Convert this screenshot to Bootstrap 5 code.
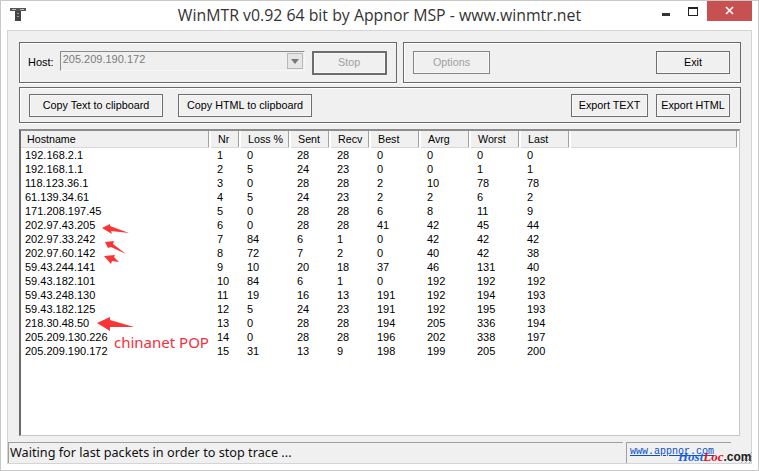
<!DOCTYPE html>
<html><head><meta charset="utf-8">
<link href="https://cdn.jsdelivr.net/npm/bootstrap@5.3.0/dist/css/bootstrap.min.css" rel="stylesheet">
<style>
html,body{margin:0;width:759px;height:471px;overflow:hidden;background:#fff}
.win{width:759px;height:471px;border:1px solid #c8c8c8;background:#fff;font-family:"Liberation Sans",sans-serif;font-size:11px;color:#000;position:relative}
.tbar{height:29px;position:relative}
.ttl{font-family:"Open Sans",sans-serif;font-size:15.85px;color:#333;line-height:29px;text-align:center}
.ticon{position:absolute;left:9px;top:7px}
.wbtns{position:absolute;right:6px;top:0}
.wmin{width:8px;height:3px;background:#333;margin-top:12px;margin-right:18px}
.wmax{width:10px;height:9px;border:1px solid #222;border-top-width:2px;margin-top:6px;margin-right:9px}
.wcl{width:45px;height:20px;background:#c75050}
.wcl svg{display:block;margin:5px auto 0}
.client{position:absolute;left:6px;top:29px;width:745px;height:434px;background:#f0f0f0;border:1px solid #d4d4d4;padding:11px 10px 0 11px}
.grp{border:1px solid #696969;box-shadow:0 1px 0 #fff,inset 1px 1px 0 #fff;background:#f0f0f0}
.g1{width:378px;height:41px;padding:8px 9px}
.g2{width:338px;height:41px;padding:8px 10px 0 9px}
.g3{height:36px;margin-top:4px;margin-bottom:6px;padding:6px 10px 6px 9px}
.wb{background:#f0f0f0;border:1px solid #6e6e6e;height:23px;line-height:18px;text-align:center;color:#000;font-size:10.8px;padding:0 0 2px;box-shadow:inset 0 0 0 1px #f8f8f8}
.dis{color:#a0a0a0;border-color:#858585}
.stopb{width:75px;height:24px;border:2px solid #6d6d6d;margin-left:7px}
.combo{width:245px;height:20px;border:1px solid;border-color:#8a8a8a #f8f8f8 #f8f8f8 #8a8a8a;background:#efefef;color:#7c7c7c;line-height:15px;padding-left:2px;margin-left:6px;position:relative;font-size:11px}
.carr{position:absolute;right:1px;top:1px;width:16px;height:16px;background:#e6e6e6;border:1px solid #b8b8b8}
.carr::after{content:"";position:absolute;left:3px;top:5px;border:4px solid transparent;border-top:5px solid #777;border-bottom:0}
.hostl{padding-top:3px;margin-left:-1px}
.w-opt{width:77px}.w-exit{width:74px}.w-copy{width:134px}.w-etx{width:77px}
.gap-l{margin-left:8px}.gap-c{margin-left:15px}
.lst{height:307px;background:#fff;border:1px solid #c8c8c8;border-top:2px solid #8c8c8c;border-left:2px solid #6a6a6a;overflow:hidden;width:721px}
.grid{table-layout:fixed;border-collapse:collapse;width:718px}
.grid col{width:50px}
.grid col.c-h{width:189px}.grid col.c-n{width:30px}.grid col.c-s{width:40px}.grid col.c-r{width:auto}
.grid th{font-weight:400;font-size:10.7px;height:16px;padding:1px 0 0 7px;background:#f0f0f0;border-right:2px solid #fff;box-shadow:inset -1px 0 0 #a0a0a0;border-bottom:1px solid #d8d8d8;white-space:nowrap;line-height:14px}
.grid td{height:14px;padding:0 0 0 7px;line-height:14px;white-space:nowrap}
.grid th:first-child{padding-left:6px}
.grid td:first-child{padding-left:4px}
.sbar{position:absolute;left:0;top:411px;height:21px;width:742px}
.s1{width:615px;height:21px;border-top:1px solid #a0a0a0;border-left:1px solid #a0a0a0;font-size:12.7px;padding-left:1px;line-height:19px;font-family:"Noto Sans",sans-serif;color:#111;background:#f0f0f0;white-space:nowrap}
.s2{width:105px;height:21px;margin-left:3px;border-top:1px solid #a0a0a0;border-left:1px solid #a0a0a0;padding-left:3px;font-family:"Liberation Mono",monospace;font-size:10px;line-height:17px;color:#0a4fc4;text-decoration:underline}
.grip{position:absolute;right:6px;bottom:7px}
.wm{position:absolute;left:677px;top:449px;font-family:"Liberation Serif",serif;font-weight:700;font-style:italic;font-size:13px;line-height:14px;white-space:nowrap}
.wm .h{color:#1464e8}.wm .l{color:#e0142c}.wm .c{color:#222;font-family:"Liberation Sans",sans-serif;font-style:normal;font-size:12px}
.over{position:absolute;left:-1px;top:-1px;pointer-events:none}
.note{position:absolute;left:113px;top:331px;color:#f42f3c;font-family:"Noto Sans",sans-serif;font-size:15px;line-height:20px}
</style></head><body>
<div class="win">
 <div class="tbar">
  <svg class="ticon" width="18" height="14" viewBox="0 0 18 14"><path d="M0 0h16v3h-16z" fill="#555"/><path d="M5 3h6v10h-6z" fill="#444"/><path d="M2 1h4v1h-4zM10 1h4v1h-4z" fill="#bbb"/><path d="M7 5h2v1h-2zM7 8h2v1h-2z" fill="#999"/></svg>
  <div class="ttl">WinMTR v0.92 64 bit by Appnor MSP - www.winmtr.net</div>
  <div class="wbtns d-flex align-items-start"><div class="wmin"></div><div class="wmax"></div><div class="wcl"><svg width="9" height="9" viewBox="0 0 9 9"><path d="M1 1l7 7M8 1l-7 7" stroke="#fff" stroke-width="1.6"/></svg></div></div>
 </div>
 <div class="client">
  <div class="d-flex justify-content-between">
   <div class="grp g1 d-flex align-items-start"><span class="hostl">Host:</span><div class="combo">205.209.190.172<span class="carr"></span></div><button class="wb dis stopb">Stop</button></div>
   <div class="grp g2 d-flex justify-content-between align-items-start"><button class="wb dis w-opt">Options</button><button class="wb w-exit">Exit</button></div>
  </div>
  <div class="grp g3 d-flex"><button class="wb w-copy">Copy Text to clipboard</button><button class="wb w-copy gap-c">Copy HTML to clipboard</button><button class="wb ms-auto w-etx">Export TEXT</button><button class="wb w-exit gap-l">Export HTML</button></div>
  <div class="lst"><table class="grid"><colgroup><col class="c-h"><col class="c-n"><col><col class="c-s"><col class="c-s"><col><col><col><col><col class="c-r"></colgroup>
  <thead><tr><th>Hostname</th><th>Nr</th><th>Loss %</th><th>Sent</th><th>Recv</th><th>Best</th><th>Avrg</th><th>Worst</th><th>Last</th><th></th></tr></thead>
  <tbody id="rows"></tbody></table></div>
  <div class="sbar d-flex"><div class="s1">Waiting for last packets in order to stop trace ...</div><div class="s2">www.appnor.com</div></div>
 </div>
 <svg class="grip" width="13" height="13" viewBox="0 0 13 13"><path d="M2 13L13 2M6 13L13 6M10 13l3-3" stroke="#a8a8a8" fill="none"/></svg>
 <svg class="over" width="759" height="471" viewBox="0 0 759 471">
  <path d="M102 228l8-4 0 2 19 7-18-2 1 3z" fill="#f93535"/>
  <path d="M105 242l9-1-1 3 13 10-15-7-3 1z" fill="#f93535"/>
  <path d="M104 256l11-1-1 2 5 5-7-1-1 3z" fill="#f93535"/>
  <path d="M97 323l13-6 0 3 24 7-24 0 0 4z" fill="#f93535"/>
 </svg>
 <div class="note">chinanet POP</div>
 <div class="wm"><span class="h">Host</span><span class="l">Loc</span><span class="c">.com</span></div>
</div>
<script>
const d=`192.168.2.1 1 0 28 28 0 0 0 0
192.168.1.1 2 5 24 23 0 0 1 1
118.123.36.1 3 0 28 28 2 10 78 78
61.139.34.61 4 5 24 23 2 2 6 2
171.208.197.45 5 0 28 28 6 8 11 9
202.97.43.205 6 0 28 28 41 42 45 44
202.97.33.242 7 84 6 1 0 42 42 42
202.97.60.142 8 72 7 2 0 40 42 38
59.43.244.141 9 10 20 18 37 46 131 40
59.43.182.101 10 84 6 1 0 192 192 192
59.43.248.130 11 19 16 13 191 192 194 193
59.43.182.125 12 5 24 23 191 192 195 193
218.30.48.50 13 0 28 28 194 205 336 194
205.209.130.226 14 0 28 28 196 202 338 197
205.209.190.172 15 31 13 9 198 199 205 200`;
document.getElementById('rows').innerHTML=d.split('\n').map(r=>'<tr>'+r.split(' ').map(c=>'<td>'+c+'</td>').join('')+'<td></td></tr>').join('');
</script>
</body></html>
